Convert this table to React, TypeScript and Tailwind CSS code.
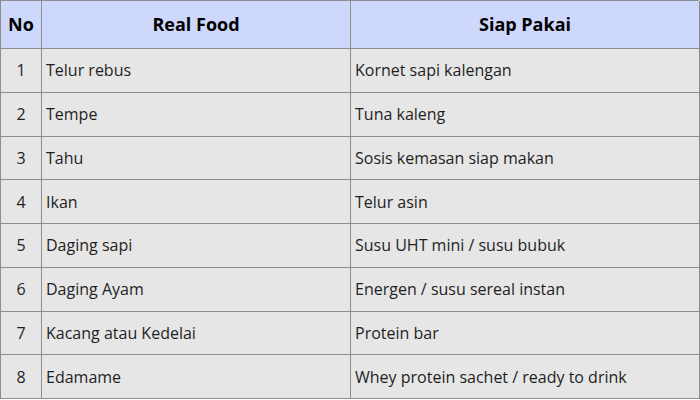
const rows = [
  ['Telur rebus', 'Kornet sapi kalengan'],
  ['Tempe', 'Tuna kaleng'],
  ['Tahu', 'Sosis kemasan siap makan'],
  ['Ikan', 'Telur asin'],
  ['Daging sapi', 'Susu UHT mini / susu bubuk'],
  ['Daging Ayam', 'Energen / susu sereal instan'],
  ['Kacang atau Kedelai', 'Protein bar'],
  ['Edamame', 'Whey protein sachet / ready to drink'],
];

const cell = 'flex items-center border-r border-b border-[#8e8e8e]';

export default function App() {
  return (
    <div className="w-[700px] h-[400px] bg-white font-['Open_Sans',sans-serif] text-[#1f1f1f]">
      <div className="grid w-[699px] grid-cols-[41px_309px_349px] grid-rows-[48px_repeat(8,43.75px)] border-l border-t border-[#8e8e8e]">
        {/* Header */}
        <div className={`${cell} justify-center bg-[#cdd8fc] text-[18px] font-bold text-black`}>No</div>
        <div className={`${cell} justify-center bg-[#cdd8fc] text-[18px] font-bold text-black`}>Real Food</div>
        <div className={`${cell} justify-center bg-[#cdd8fc] text-[18px] font-bold text-black`}>Siap Pakai</div>

        {rows.map(([food, ready], i) => (
          <div key={i} className="contents">
            <div className={`${cell} justify-center bg-[#e6e6e6] text-[16px]`}>{i + 1}</div>
            <div className={`${cell} bg-[#e6e6e6] pl-[4px] text-[16px]`}>{food}</div>
            <div className={`${cell} bg-[#e6e6e6] pl-[4px] text-[16px]`}>{ready}</div>
          </div>
        ))}
      </div>
    </div>
  );
}
